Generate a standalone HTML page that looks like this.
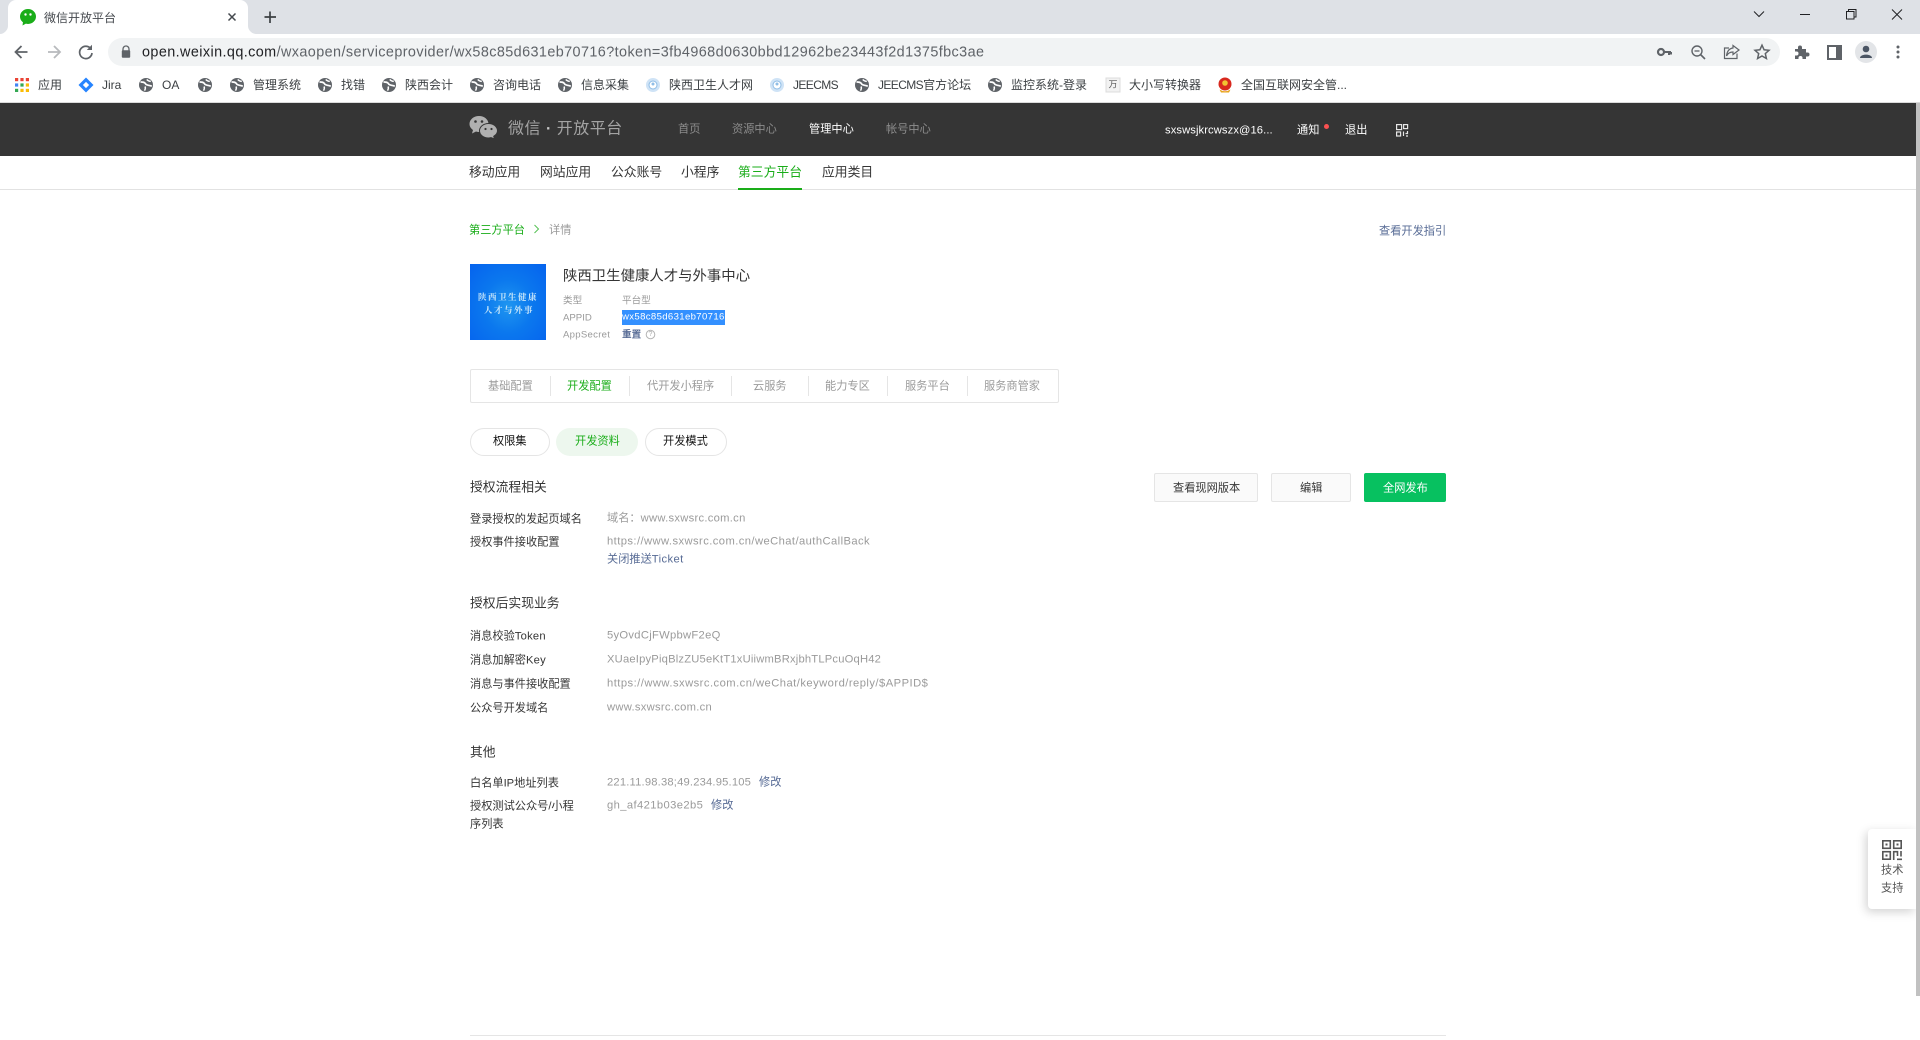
<!DOCTYPE html>
<html lang="zh-CN">
<head>
<meta charset="utf-8">
<title>微信开放平台</title>
<style>
html,body{margin:0;padding:0;width:1920px;height:1040px;overflow:hidden;background:#fff}
body{position:relative;font-family:"Liberation Sans","Noto Sans CJK SC",sans-serif;}
.t{position:absolute;white-space:nowrap;transform:translateY(calc(-50% + 1px));line-height:1.2;font-size:11.2px;color:#353535}
.t.bm,.t.s,.t.h{transform:translateY(-50%)}
.b{position:absolute;box-sizing:border-box}
svg{position:absolute;overflow:visible}
.bm{font-size:12px;color:#3c4043}
.l{font-size:11.2px;color:#353535;left:470px}
.v{font-size:11.2px;color:#9a9a9a;left:607px}
.h{font-size:12.8px;color:#353535;left:470px}
.s{font-size:12.8px;color:#353535;top:172px}
.n{font-size:11.2px;color:#8d8d8d;top:129px}
.tb{font-size:11.2px;color:#9a9a9a;top:386px}
.lk{color:#576b95}
.sm{font-size:9.6px;color:#9a9a9a}
.dv{position:absolute;top:376px;height:20px;width:1px;background:#e5e5e5}
.ls{letter-spacing:.25px}
</style>
</head>
<body>
<svg width="0" height="0" style="position:absolute"><defs>
<g id="globe"><circle cx="0" cy="0" r="7" fill="#5f6368"/><path d="M-5.500-3C-3.500-3-1.500-3.200-.5-1.200.5.800 3-.2 5.800 1.200" stroke="#fff" stroke-width="1.700" fill="none"/><path d="M.8-5.600C1.800-4.200 3.200-3.800 4.800-3.600M-1 1.500C-.3 3-.8 4.500-1.500 5.600" stroke="#fff" stroke-width="1.500" fill="none"/></g>
</defs></svg>

<!-- Tab strip -->
<div class="b" style="left:0;top:0;width:1920px;height:34px;background:#dee1e6"></div>
<div class="b" style="left:8px;top:0;width:240px;height:34px;background:#fff;border-radius:8px 8px 0 0"></div>
<svg style="left:0;top:0" width="260" height="34">
<path d="M0 34C4 34 8 30 8 26V34Z M248 26C248 30 252 34 256 34H248Z" fill="#fff"/>
<ellipse cx="28" cy="16.500" rx="8" ry="7.500" fill="#1aad19"/><path d="M23 22L22.500 25.500 27 23Z" fill="#1aad19"/>
<circle cx="25.500" cy="14.500" r="1.200" fill="#fff"/><circle cx="30.500" cy="14.500" r="1.200" fill="#fff"/>
<path d="M228.500 13.500L235.500 20.500M235.500 13.500L228.500 20.500" stroke="#45494e" stroke-width="1.500"/>
<path d="M270 11.500V23M264.500 17H276" stroke="#3c4043" stroke-width="1.700"/>
</svg>
<div class="t" style="left:44px;top:18px;font-size:12px;color:#45494e;transform:translateY(-50%)">微信开放平台</div>
<svg style="left:1740px;top:0" width="180" height="34" fill="none" stroke="#202124" stroke-width="1">
<path d="M1754 11.500L1759 16.500 1764 11.500" transform="translate(-1740 0)"/>
<path d="M60 14.500H70"/>
<path d="M106.500 11.500h7.500v7.500h-7.500zM108.500 11.500v-2h7.500v7.500h-2"/>
<path d="M152 9.500L162 19.500M162 9.500L152 19.500"/>
</svg>

<!-- Toolbar -->
<svg style="left:0;top:34px" width="140" height="36" fill="none">
<path d="M27.500 18H16M21.500 12L15.500 18 21.500 24" stroke="#5f6368" stroke-width="1.800"/>
<path d="M48 18H59.500M54 12L60 18 54 24" stroke="#b8babd" stroke-width="1.800"/>
<path d="M91 15A6.200 6.200 0 1 0 92 19" stroke="#5f6368" stroke-width="1.700"/><path d="M92 10.800V16H86.800Z" fill="#5f6368"/>
</svg>
<div class="b" style="left:108px;top:38px;width:1672px;height:28px;background:#f1f3f4;border-radius:14px"></div>
<svg style="left:120px;top:44px" width="14" height="16"><path d="M3 6.500V5A3 3 0 0 1 9 5V6.500" fill="none" stroke="#5f6368" stroke-width="1.300"/><rect x="1.800" y="6.200" width="8.400" height="7.500" rx="1" fill="#5f6368"/></svg>
<div class="t" style="left:142px;top:52px;font-size:14.400px;color:#5f6368;letter-spacing:.41px"><span style="color:#202124">open.weixin.qq.com</span>/wxaopen/serviceprovider/wx58c85d631eb70716?token=3fb4968d0630bbd12962be23443f2d1375fbc3ae</div>
<svg style="left:1650px;top:38px" width="270" height="30" fill="none" stroke="#5f6368">
<circle cx="11" cy="14" r="3" stroke-width="2.200"/><path d="M14 14H21M19 14V17M21 14V16.500" stroke-width="2"/>
<circle cx="47" cy="13" r="5" stroke-width="1.400"/><path d="M44.500 13H49.500" stroke-width="1.300"/><path d="M50.500 16.500L55 21" stroke-width="1.600"/>
<g transform="translate(-1 0)"><path d="M88 15.500V20.500H75.500V10H80" stroke-width="1.200"/><path d="M84 7.500L90 12 84 16.500V14C81 14 79 15 77.500 18 78 13.500 80 10.500 84 10Z" stroke-width="1.200"/></g>
<path d="M112 7.200L114.100 11.800 119 12.300 115.300 15.600 116.400 20.500 112 18 107.600 20.500 108.700 15.600 105 12.300 109.900 11.800Z" stroke-width="1.500"/>
<g transform="translate(-1 0)"><path d="M146 11H149V9.500A2 2 0 0 1 153 9.500V11H157V14.500H158.500A2 2 0 0 1 158.500 18.500H157V21H153.500V20A2 2 0 0 0 149.500 20V21H146V17.500H147.500A2 2 0 0 0 147.500 13.500H146Z" fill="#5f6368" stroke="none"/></g>
<rect x="178" y="8" width="13" height="13" stroke-width="2"/><rect x="186" y="8" width="5" height="13" fill="#5f6368" stroke="none"/>
<circle cx="216" cy="14" r="11" fill="#e3e5e8" stroke="none"/>
<circle cx="216" cy="11" r="3.300" fill="#4b5564" stroke="none"/><path d="M210 20C210 15.500 222 15.500 222 20Z" fill="#4b5564" stroke="none"/>
<circle cx="248" cy="9" r="1.500" fill="#5f6368" stroke="none"/><circle cx="248" cy="14" r="1.500" fill="#5f6368" stroke="none"/><circle cx="248" cy="19" r="1.500" fill="#5f6368" stroke="none"/>
</svg>

<!-- Bookmarks -->
<svg style="left:0;top:70px" width="1250" height="32">
<g>
<rect x="15" y="8" width="3.200" height="3.200" fill="#ea4335"/><rect x="20.400" y="8" width="3.200" height="3.200" fill="#ea4335"/><rect x="25.800" y="8" width="3.200" height="3.200" fill="#ea4335"/>
<rect x="15" y="13.400" width="3.200" height="3.200" fill="#4285f4"/><rect x="20.400" y="13.400" width="3.200" height="3.200" fill="#34a853"/><rect x="25.800" y="13.400" width="3.200" height="3.200" fill="#fbbc05"/>
<rect x="15" y="18.800" width="3.200" height="3.200" fill="#34a853"/><rect x="20.400" y="18.800" width="3.200" height="3.200" fill="#fbbc05"/><rect x="25.800" y="18.800" width="3.200" height="3.200" fill="#fbbc05"/>
</g>
<path d="M86 7.500L93.500 15 86 22.500 78.500 15Z" fill="#2684ff"/><rect x="83.800" y="12.800" width="4.400" height="4.400" transform="rotate(45 86 15)" fill="#fff"/>
<use href="#globe" x="146" y="15"/><use href="#globe" x="205" y="15"/><use href="#globe" x="237" y="15"/><use href="#globe" x="325" y="15"/><use href="#globe" x="389" y="15"/><use href="#globe" x="477" y="15"/><use href="#globe" x="565" y="15"/><use href="#globe" x="862" y="15"/><use href="#globe" x="995" y="15"/>
<circle cx="653" cy="15" r="7" fill="#cfe3f6"/><circle cx="653" cy="15" r="4" fill="#fff" stroke="#8fbde6"/><circle cx="653" cy="14" r="1.500" fill="#8fbde6"/>
<circle cx="777" cy="15" r="7" fill="#cfe3f6"/><circle cx="777" cy="15" r="4" fill="#fff" stroke="#8fbde6"/><circle cx="777" cy="14" r="1.500" fill="#8fbde6"/>
<rect x="1106" y="8" width="14" height="14" fill="#f2f2f2" stroke="#dcdcdc"/>
<circle cx="1225" cy="14" r="6.500" fill="#d8281e"/><circle cx="1225" cy="13" r="2.800" fill="#f1c232"/><path d="M1219.500 19.500Q1225 23 1230.500 19.500L1229 22.500H1221Z" fill="#e8a51c"/>
</svg>
<div class="t bm" style="left:38px;top:85px">应用</div>
<div class="t bm" style="left:102px;top:85px">Jira</div>
<div class="t bm" style="left:162px;top:85px">OA</div>
<div class="t bm" style="left:253px;top:85px">管理系统</div>
<div class="t bm" style="left:341px;top:85px">找错</div>
<div class="t bm" style="left:405px;top:85px">陕西会计</div>
<div class="t bm" style="left:493px;top:85px">咨询电话</div>
<div class="t bm" style="left:581px;top:85px">信息采集</div>
<div class="t bm" style="left:669px;top:85px">陕西卫生人才网</div>
<div class="t bm" style="left:793px;top:85px;letter-spacing:-.6px">JEECMS</div>
<div class="t bm" style="left:878px;top:85px"><span style="letter-spacing:-.6px">JEECMS</span>官方论坛</div>
<div class="t bm" style="left:1011px;top:85px">监控系统-登录</div>
<div class="t" style="left:1108.500px;top:84px;font-size:9px;color:#555">万</div>
<div class="t bm" style="left:1129px;top:85px">大小写转换器</div>
<div class="t bm" style="left:1241px;top:85px">全国互联网安全管...</div>

<!-- Header -->
<div class="b" style="left:0;top:102px;width:1920px;height:1px;background:#dadada"></div>
<div class="b" style="left:0;top:103px;width:1920px;height:53px;background:#353535"></div>
<svg style="left:469px;top:115px" width="30" height="26" fill="#b0b0b0">
<path d="M10 1C4.500 1 0.500 4.700 0.500 9C0.500 11.500 2 13.600 4 15L3 18.500 7 16.500C8 16.800 9 17 10 17 15 17 19.500 13.500 19.500 9 19.500 4.700 15.500 1 10 1Z"/>
<path d="M19.500 8.500C14.500 8.500 10.500 11.800 10.500 15.800 10.500 19.800 14.500 23 19.500 23 20.500 23 21.300 22.800 22.200 22.600L25.500 24 24.700 21.300C27 20 28.500 18 28.500 15.800 28.500 11.800 24.500 8.500 19.500 8.500Z" stroke="#353535" stroke-width="1"/>
<circle cx="6.500" cy="6.500" r="1.300" fill="#353535"/><circle cx="13" cy="6.500" r="1.300" fill="#353535"/>
<circle cx="16.500" cy="14" r="1.100" fill="#353535"/><circle cx="22.500" cy="14" r="1.100" fill="#353535"/>
</svg>
<div class="t" style="left:508px;top:128px;font-size:16px;color:#a3a3a3;letter-spacing:.5px">微信 <b style="color:#c8c8c8">·</b> 开放平台</div>
<div class="t n" style="left:678px">首页</div>
<div class="t n" style="left:732px">资源中心</div>
<div class="t n" style="left:809px;color:#fff">管理中心</div>
<div class="t n" style="left:886px">帐号中心</div>
<div class="t" style="left:1165px;top:130px;font-size:11.200px;color:#fff;letter-spacing:.1px">sxswsjkrcwszx@16...</div>
<div class="t" style="left:1297px;top:130px;color:#fff">通知</div>
<div class="b" style="left:1323.500px;top:123.500px;width:5px;height:5px;border-radius:50%;background:#fa5151"></div>
<div class="t" style="left:1345px;top:130px;color:#fff">退出</div>
<svg style="left:1396px;top:124px" width="13" height="13" fill="none" stroke="#e6e6e6" stroke-width="1.200">
<rect x=".6" y=".6" width="5" height="5"/><rect x="7.600" y=".6" width="4" height="4"/><rect x=".6" y="8" width="4" height="4"/><path d="M7.500 7.500V12M11.500 7V9.500H9.500M10 12H12"/>
</svg>

<!-- Sub nav -->
<div class="b" style="left:0;top:189px;width:1920px;height:1px;background:#e2e2e2"></div>
<div class="t s" style="left:469px">移动应用</div>
<div class="t s" style="left:540px">网站应用</div>
<div class="t s" style="left:611px">公众账号</div>
<div class="t s" style="left:681px">小程序</div>
<div class="t s" style="left:738px;color:#1aad19">第三方平台</div>
<div class="b" style="left:738px;top:188px;width:64px;height:2px;background:#1aad19"></div>
<div class="t s" style="left:822px">应用类目</div>

<!-- Breadcrumb -->
<div class="t" style="left:469px;top:230px;color:#1aad19">第三方平台</div>
<svg style="left:533px;top:224px" width="8" height="10"><path d="M1.500 1L5.500 5 1.500 9" fill="none" stroke="#55c054" stroke-width="1"/></svg>
<div class="t" style="left:549px;top:230px;color:#9a9a9a">详情</div>
<div class="t lk" style="left:1379px;top:231px">查看开发指引</div>

<!-- App info -->
<div class="b" style="left:470px;top:264px;width:76px;height:76px;background:radial-gradient(ellipse at 50% 55%,#1f96f0 0%,#0b78ee 45%,#0563ee 100%)"></div>
<div class="t" style="left:478px;top:296px;font-size:8.500px;font-weight:700;color:#c8e6fa;letter-spacing:1.500px;font-family:'Liberation Serif','Noto Serif CJK SC',serif">陕西卫生健康</div>
<div class="t" style="left:484px;top:309px;font-size:8.500px;font-weight:700;color:#c8e6fa;letter-spacing:1.500px;font-family:'Liberation Serif','Noto Serif CJK SC',serif">人才与外事</div>
<div class="t" style="left:563px;top:276px;font-size:14.400px;color:#353535">陕西卫生健康人才与外事中心</div>
<div class="t sm" style="left:563px;top:300px">类型</div>
<div class="t sm" style="left:622px;top:300px">平台型</div>
<div class="t sm" style="left:563px;top:317px">APPID</div>
<div class="b" style="left:622px;top:310px;width:103px;height:15px;background:#3390ff"></div>
<div class="t sm" style="left:622px;top:316px;color:#fff;letter-spacing:.34px">wx58c85d631eb70716</div>
<div class="t sm" style="left:563px;top:334px;letter-spacing:.27px">AppSecret</div>
<div class="t sm lk" style="left:622px;top:334px;font-weight:700;color:#576b95">重置</div>
<svg style="left:645px;top:329px" width="11" height="11"><circle cx="5.500" cy="5.500" r="4.300" fill="none" stroke="#b5b5b5"/></svg>
<div class="t" style="left:648.500px;top:334px;font-size:7px;color:#aaa">?</div>

<!-- Tabs -->
<div class="b" style="left:470px;top:369px;width:589px;height:34px;border:1px solid #e5e5e5;border-radius:2px"></div>
<div class="dv" style="left:550px"></div><div class="dv" style="left:629px"></div><div class="dv" style="left:731px"></div><div class="dv" style="left:808px"></div><div class="dv" style="left:887px"></div><div class="dv" style="left:967px"></div>
<div class="t tb" style="left:488px">基础配置</div>
<div class="t tb" style="left:567px;color:#1aad19">开发配置</div>
<div class="t tb" style="left:647px">代开发小程序</div>
<div class="t tb" style="left:753px">云服务</div>
<div class="t tb" style="left:825px">能力专区</div>
<div class="t tb" style="left:905px">服务平台</div>
<div class="t tb" style="left:984px">服务商管家</div>

<!-- Pills -->
<div class="b" style="left:470px;top:428px;width:80px;height:28px;border:1px solid #e5e5e5;border-radius:14px"></div>
<div class="t" style="left:493px;top:441px;color:#111">权限集</div>
<div class="b" style="left:556px;top:428px;width:82px;height:28px;background:#edf7ee;border-radius:14px"></div>
<div class="t" style="left:575px;top:441px;color:#1aad19">开发资料</div>
<div class="b" style="left:645px;top:428px;width:82px;height:28px;border:1px solid #e5e5e5;border-radius:14px"></div>
<div class="t" style="left:663px;top:441px;color:#111">开发模式</div>

<!-- Buttons -->
<div class="b" style="left:1154px;top:473px;width:104px;height:29px;background:#fafafa;border:1px solid #e5e5e5;border-radius:2px"></div>
<div class="t" style="left:1173px;top:488px">查看现网版本</div>
<div class="b" style="left:1271px;top:473px;width:80px;height:29px;background:#fafafa;border:1px solid #e5e5e5;border-radius:2px"></div>
<div class="t" style="left:1300px;top:488px">编辑</div>
<div class="b" style="left:1364px;top:473px;width:82px;height:29px;background:#07c160;border-radius:2px"></div>
<div class="t" style="left:1383px;top:488px;color:#fff">全网发布</div>

<!-- Section 1 -->
<div class="t h" style="top:487px">授权流程相关</div>
<div class="t l" style="top:519px">登录授权的发起页域名</div>
<div class="t v" style="top:518px">域名：<span style="letter-spacing:.29px">www.sxwsrc.com.cn</span></div>
<div class="t l" style="top:542px">授权事件接收配置</div>
<div class="t v" style="top:541px;letter-spacing:.43px">https://www.sxwsrc.com.cn/weChat/authCallBack</div>
<div class="t v lk" style="top:559px;color:#576b95">关闭推送<span style="letter-spacing:.4px">Ticket</span></div>

<!-- Section 2 -->
<div class="t h" style="top:603px">授权后实现业务</div>
<div class="t l" style="top:636px">消息校验<span class="ls">Token</span></div>
<div class="t v" style="top:635px;letter-spacing:.3px">5yOvdCjFWpbwF2eQ</div>
<div class="t l" style="top:660px">消息加解密<span class="ls">Key</span></div>
<div class="t v" style="top:659px;letter-spacing:.2px">XUaeIpyPiqBlzZU5eKtT1xUiiwmBRxjbhTLPcuOqH42</div>
<div class="t l" style="top:684px">消息与事件接收配置</div>
<div class="t v" style="top:683px;letter-spacing:.47px">https://www.sxwsrc.com.cn/weChat/keyword/reply/$APPID$</div>
<div class="t l" style="top:708px">公众号开发域名</div>
<div class="t v" style="top:707px;letter-spacing:.29px">www.sxwsrc.com.cn</div>

<!-- Section 3 -->
<div class="t h" style="top:752px">其他</div>
<div class="t l" style="top:783px">白名单IP地址列表</div>
<div class="t v" style="top:782px;letter-spacing:.19px">221.11.98.38;49.234.95.105</div>
<div class="t lk" style="left:759px;top:782px;color:#576b95">修改</div>
<div class="t l" style="top:806px">授权测试公众号/小程</div>
<div class="t l" style="top:824px">序列表</div>
<div class="t v" style="top:805px;letter-spacing:.4px">gh_af421b03e2b5</div>
<div class="t lk" style="left:711px;top:805px;color:#576b95">修改</div>

<div class="b" style="left:470px;top:1035px;width:976px;height:1px;background:#e5e5e5"></div>

<!-- Floating support -->
<div class="b" style="left:1868px;top:829px;width:48px;height:80px;background:#fff;border-radius:4px 0 0 4px;box-shadow:-2px 3px 10px rgba(0,0,0,.18)"></div>
<svg style="left:1882px;top:840px" width="20" height="20" fill="none" stroke="#555" stroke-width="1.600">
<rect x=".8" y=".8" width="7.500" height="7.500"/><rect x="11.700" y=".8" width="7.500" height="7.500"/><rect x=".8" y="11.700" width="7.500" height="7.500"/>
<rect x="3.500" y="3.500" width="2" height="2" fill="#555" stroke="none"/><rect x="14.500" y="3.500" width="2" height="2" fill="#555" stroke="none"/><rect x="3.500" y="14.500" width="2" height="2" fill="#555" stroke="none"/>
<path d="M11.700 20V11.700H15.500V16M19 11V16.500M15 19.300H20"/>
</svg>
<div class="t" style="left:1881px;top:870px;color:#555">技术</div>
<div class="t" style="left:1881px;top:888px;color:#555">支持</div>

<!-- Scrollbar -->
<div class="b" style="left:1916px;top:103px;width:4px;height:893px;background:#c1c1c1"></div>
</body>
</html>
